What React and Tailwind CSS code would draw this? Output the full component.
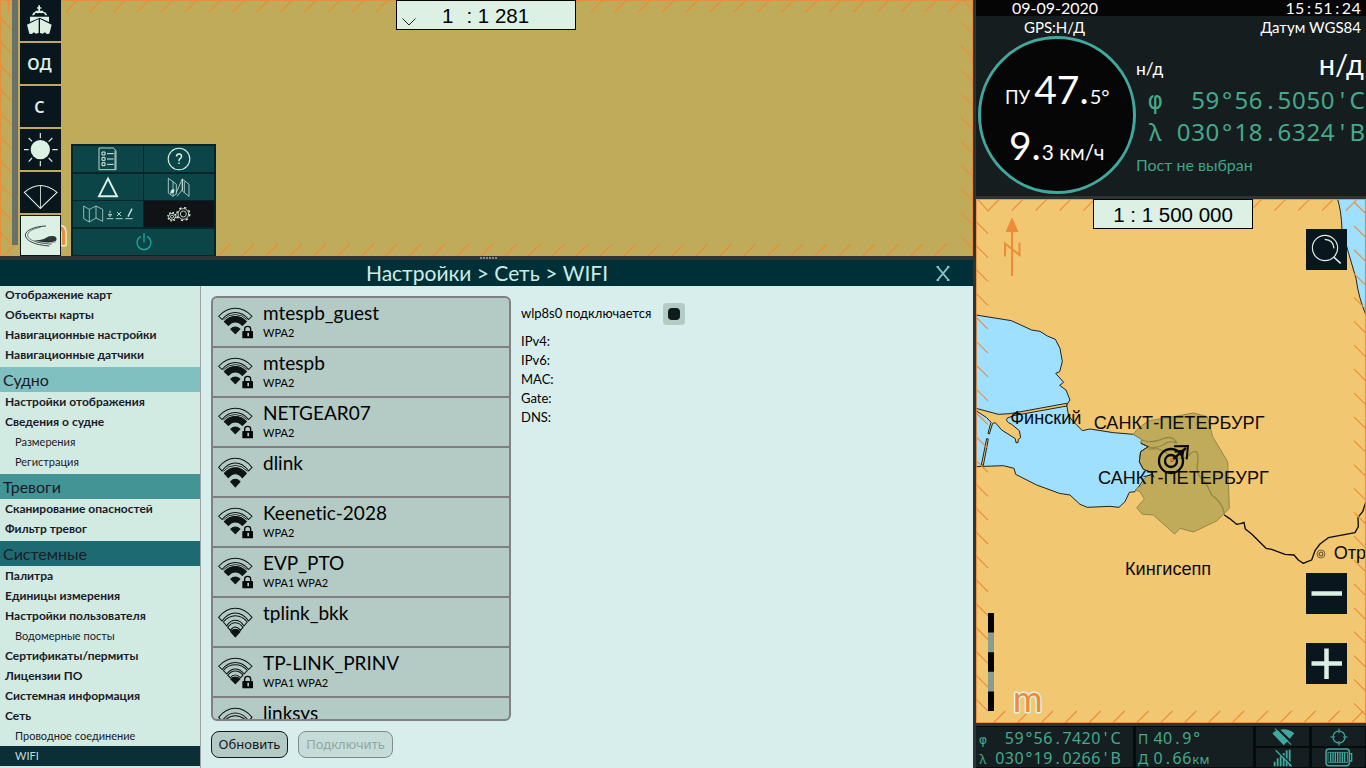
import React from 'react';

const STEP = 23.87;
const range = (n) => Array.from({ length: n }, (_, i) => i);

function Mono({ text }) {
  return (
    <span className="font-['Noto_Sans',sans-serif] tracking-[0.028em] whitespace-nowrap">
      {text.split(/([^0-9])/).filter(Boolean).map((part, i) =>
        /[0-9]/.test(part) ? part : (
          <span key={i} className={'inline-block w-[0.6em] text-center tracking-normal ' + (part === 'φ' ? "font-['DejaVu_Sans_Mono',monospace]" : '')}>{part}</span>
        )
      )}
    </span>
  );
}

/* ---------- wide chart on the left ---------- */

function HarborChart() {
  return (
    <svg className="absolute inset-0" width="973" height="256" viewBox="0 0 973 256">
      <rect width="973" height="256" fill="#bfab5a" />
      <g stroke="#ee8a38" strokeWidth="1.1" fill="none">
        <path d="M0 .5H972.5V256M.5 0V256" opacity=".8" />
        {range(39).map((i) => <path key={i} d={`M${65.7 + STEP * i - 24} 12l12 -12`} />)}
        {range(40).map((i) => <path key={i} d={`M${3.5 + STEP * i} 256l12 -12`} />)}
        {range(11).map((i) => <path key={i} d={`M0 ${17.5 + STEP * (i - 1)}l12 12`} />)}
        {range(12).map((i) => <path key={i} d={`M961.5 ${-1.5 + STEP * i}l11.5 11.5`} />)}
        <path d="M8.5 0V12" />
        <path d="M36.3 40v4" strokeWidth="2" />
      </g>
      <text x="38" y="244.500" fontFamily="Lato, sans-serif" fontSize="36" fill="#ee8a38" stroke="#dcf0e4" strokeWidth="3" strokeLinejoin="round" paintOrder="stroke">m</text>
      <rect x="12" y="0" width="6" height="245" fill="#68706a" />
    </svg>
  );
}

const tool = 'flex size-[41px] shrink-0 items-center justify-center bg-[#0a161d]';

function Toolbar() {
  return (
    <div className="absolute top-0 left-5 flex flex-col gap-[2px] font-['Noto_Sans',sans-serif] text-base font-semibold text-[#dcf0e4]">
      <div className={tool}>
        <svg width="41" height="41" viewBox="0 0 123 123" fill="#dcf0e4">
          <path d="M55 16h5v6h4v4h-4v6h9l2 5h5l6 9h-5l-6-6H48l-7 6h-5l5-9h4l2-5h8v-6h-4v-4h4z" />
          <path d="M30 50H87V66L59 53L30 66z" />
          <path d="M56 57L21 74L28 101L36 102L41 97L48 101L56 99z" />
          <path d="M60 57L95 74L88 101L80 102L75 97L68 101L60 99z" />
          <path d="M46 39h5v7h-5zM55 39h7v7h-7zM66 39h5v7h-5z" fill="#0a161d" />
        </svg>
      </div>
      <div className={tool}><span className="mt-px -ml-[2px]">ОД</span></div>
      <div className={tool}><span className="mt-px -ml-[2px]">С</span></div>
      <div className={tool}>
        <svg width="41" height="41" viewBox="0 0 123 123">
          <circle cx="61" cy="62" r="29" fill="#dcf0e4" />
          <path d="M61 12v16M61 96v16M12 62h14M97 62h16M26 27l10 10M86 87l11 11M97 27L86 38M36 87L26 98" stroke="#dcf0e4" strokeWidth="3.5" />
        </svg>
      </div>
      <div className={tool}>
        <svg width="41" height="41" viewBox="0 0 123 123" fill="none" stroke="#dcf0e4" strokeWidth="3.5">
          <path d="M61 109L13 61Q61 20 111 61z" />
          <path d="M61.500 40V109" strokeWidth="2.500" />
        </svg>
      </div>
      <div className="flex size-[41px] shrink-0 border border-[#0a161d] bg-[#dcf0e4]">
        <svg width="39" height="39" viewBox="3 3 117 117" fill="none" stroke="#3a4646">
          <path d="M78 33C45 34 17 45 16 60C17 78 45 90 88 93" strokeWidth="3" />
          <path d="M62 37C38 41 22 50 23 62C26 76 50 84 95 88" strokeWidth="2" />
          <path d="M40 75Q66 77 76 70Q90 60 104 64Q113 69 108 77Q96 84 74 82Q56 80 40 75z" fill="#283434" stroke="none" />
          <path d="M46 80Q80 90 108 80M78 68L100 76M86 64L106 71" strokeWidth="1.500" />
        </svg>
      </div>
    </div>
  );
}

const cell = 'flex items-center justify-center bg-[#0b4548]';

function QuickMenu() {
  return (
    <div className="absolute top-[144px] left-[71px] grid h-28 w-[145px] grid-cols-[70px_70px] grid-rows-[26px_26px_26px_26px] gap-x-px gap-y-[1.5px] border-2 border-[#04262b] bg-[#04262b]">
      <div className={cell}>
        <svg className="-ml-px" width="19" height="24" viewBox="0 0 57 72" fill="none" stroke="#dcf0e4" strokeWidth="2.500">
          <path d="M3 3H46L54 11V68H3zM51 11V66" />
          <path d="M12 15h9v9h-9zM12 31h9v9h-9zM12 47h9v9h-9zM27 20h20M27 36h20M27 52h20" strokeWidth="3" />
        </svg>
      </div>
      <div className={cell}>
        <svg width="24" height="24" viewBox="0 0 24 24" fill="none" stroke="#dcf0e4">
          <circle cx="12" cy="12" r="10.800" strokeWidth="1.100" />
          <path d="M9.500 9.500Q9.500 7 12 7Q14.600 7 14.600 9.300Q14.600 10.800 12.800 11.900Q12 12.500 12 14.200M12 15.600V17" strokeWidth="1.400" />
        </svg>
      </div>
      <div className={cell}>
        <svg className="-ml-px" width="22" height="22" viewBox="0 0 22 22"><path d="M11 2.500L20 20.200H2z" fill="none" stroke="#dcf0e4" strokeWidth="1.900" /></svg>
      </div>
      <div className={cell}>
        <svg width="24" height="20" viewBox="0 0 72 60" fill="none" stroke="#dcf0e4" strokeWidth="2.200">
          <path d="M4 4L18 14V58L4 48zM18 58L28 50M18 14L28 22M28 22V52M28 46L46 6M46 6V38L30 58M46 6L66 22V58L46 42zM52 14V46" />
          <path d="M13 40l8-3l-1 9l-9 3z" fill="#dcf0e4" />
        </svg>
      </div>
      <div className={cell}>
        <svg className="-ml-px" width="52" height="20" viewBox="0 0 156 60" fill="none" stroke="#c4e2d9" strokeWidth="2.200">
          <path d="M5 6L22 16V54L5 44zM22 54L42 42V6L22 16M42 6L62 16V52L42 42" />
          <path d="M74 44h20M101 44h21M130 44h22M84 20v8M79 31h10l-5 7zM105 24l12 12M117 24l-12 12" strokeWidth="2.700" />
          <path d="M138 38L150 14" strokeWidth="4" />
        </svg>
      </div>
      <div className="flex items-center justify-center bg-[#111215]">
        <svg width="26" height="20" viewBox="0 0 78 60" fill="none" stroke="#dcf0e4">
          <circle cx="52" cy="30" r="16" strokeWidth="2.500" />
          <circle cx="52" cy="30" r="19.500" strokeWidth="4" strokeDasharray="7 8.300" />
          <circle cx="52" cy="30" r="9" strokeWidth="2.500" />
          <circle cx="18" cy="38" r="10" strokeWidth="2.500" />
          <circle cx="18" cy="38" r="12.500" strokeWidth="4" strokeDasharray="4.500 5.300" />
          <circle cx="18" cy="38" r="4.500" strokeWidth="2.500" />
        </svg>
      </div>
      <div className={'col-span-2 ' + cell}>
        <svg width="18" height="20" viewBox="0 0 18 20" fill="none" stroke="#20a79f" strokeWidth="1.300">
          <path d="M6 4.300A7 7 0 1 0 12 4.300M9 1V10.500" />
        </svg>
      </div>
    </div>
  );
}

/* ---------- settings panel ---------- */

const MENU = [
  ['item', 'Отображение карт'], ['item', 'Объекты карты'], ['item', 'Навигационные настройки'], ['item', 'Навигационные датчики'],
  ['head', 'Судно', 'bg-[#80c0c0]'],
  ['item', 'Настройки отображения'], ['item', 'Сведения о судне'], ['sub', 'Размерения'], ['sub', 'Регистрация'],
  ['head', 'Тревоги', 'bg-[#439494]'],
  ['item', 'Сканирование опасностей'], ['item', 'Фильтр тревог'],
  ['head', 'Системные', 'bg-[#1e6a72]'],
  ['item', 'Палитра'], ['item', 'Единицы измерения'], ['item', 'Настройки пользователя'], ['sub', 'Водомерные посты'],
  ['item', 'Сертификаты/пермиты'], ['item', 'Лицензии ПО'], ['item', 'Системная информация'], ['item', 'Сеть'],
  ['sub', 'Проводное соединение'], ['active', 'WIFI'],
];

function Sidebar() {
  return (
    <div className="flex w-[201px] shrink-0 flex-col overflow-hidden border-r border-[#a0a3a5] bg-[#d1eae2] text-[#1b1b28]">
      <div className="-mt-px flex flex-col">
        {MENU.map(([kind, label, bg]) => {
          if (kind === 'head') return <div key={label} className={'mt-[2px] h-[25px] pl-[3px] text-base leading-[26px] ' + bg}>{label}</div>;
          if (kind === 'item') return <div key={label} className="h-5 pl-[5px] text-xs leading-5 font-bold">{label}</div>;
          if (kind === 'sub') return <div key={label} className="h-5 pl-[15px] text-[11px] leading-5">{label}</div>;
          return <div key={label} className="h-5 bg-[#0c2e37] pl-[15px] text-[11px] leading-5 text-[#c4dcd8]">{label}</div>;
        })}
      </div>
    </div>
  );
}

const NETWORKS = [
  ['mtespb_guest', 'WPA2', true], ['mtespb', 'WPA2', true], ['NETGEAR07', 'WPA2', true], ['dlink', '', true],
  ['Keenetic-2028', 'WPA2', true], ['EVP_PTO', 'WPA1 WPA2', true], ['tplink_bkk', '', false],
  ['TP-LINK_PRINV', 'WPA1 WPA2', false], ['linksys', '', false],
];

function WifiIcon({ strong, locked }) {
  return (
    <svg className="shrink-0" width="41" height="48" viewBox="0 0 123 144">
      <g transform={locked ? 'translate(0 3.5) scale(1 .886)' : undefined} fill="none" stroke="#0c1414" strokeWidth="3.200" strokeLinejoin="round">
        <path d="M17 58Q39 31 67 31Q95 31 117 58L107 69Q90 45 67 45Q44 45 27 69z" />
        {strong ? (
          <>
            <path d="M31 70Q46 52 67 52Q88 52 103 70" strokeWidth="2.500" />
            <path d="M34 76Q48 59 67 59Q86 59 100 76L88 89Q79 77 67 77Q55 77 46 89z" fill="#0c1414" />
          </>
        ) : (
          <>
            <path d="M31 72Q46 53 67 53Q88 53 103 72L93 84Q82 67 67 67Q52 67 41 84z" />
            <path d="M44 88Q54 74 67 74Q80 74 90 88L82 97Q75 87 67 87Q59 87 52 97z" />
          </>
        )}
        <path d="M67 117L53 101Q60 94 67 94Q74 94 81 101z" fill="#0c1414" />
      </g>
      {locked && (
        <g>
          <rect x="88" y="99" width="32" height="22" rx="2" fill="#050808" />
          <path d="M95 100V93A9 8 0 0 1 113 93V100" fill="none" stroke="#050808" strokeWidth="4" />
          <path d="M103 104h5v11h-5z" fill="#b4cac5" />
        </g>
      )}
    </svg>
  );
}

function NetworkList() {
  return (
    <div className="h-[425px] w-[300px] overflow-hidden rounded-md border-2 border-[#808083] bg-[#b4cac5] text-black">
      {NETWORKS.map(([name, sec, strong]) => (
        <div key={name} className="flex h-[50px] border-b-2 border-[#808083]">
          <WifiIcon strong={strong} locked={!!sec} />
          <div className="flex flex-col pl-[9px]">
            <div className="h-[26px] text-[19px] leading-[30px]">{name}</div>
            <div className="text-[11px] leading-[18px]">{sec}</div>
          </div>
        </div>
      ))}
    </div>
  );
}

function WifiPage() {
  return (
    <div className="flex flex-1 gap-[10px] bg-[#d8eeec] pt-[10px] pl-[10px]">
      <div className="flex flex-col gap-[10px]">
        <NetworkList />
        <div className="flex gap-[10px] font-['Noto_Sans',sans-serif] text-[13px] text-[#14191b]">
          <div className="flex h-[27px] w-[77px] items-center justify-center rounded-lg border border-[#14191b] bg-[#b4cac5]">Обновить</div>
          <div className="flex h-[27px] w-[95px] items-center justify-center rounded-lg border border-[#808c8c] bg-[#c6dcd8] text-[#92a5a2]">Подключить</div>
        </div>
      </div>
      <div className="flex flex-col text-[13px] text-black">
        <div className="mt-[6px] flex h-[23px] items-center gap-3">
          <span>wlp8s0 подключается</span>
          <span className="flex h-[22px] w-[22px] items-center justify-center rounded bg-[#b4cac5]">
            <span className="size-[12px] rounded bg-[#0e1c1b]" />
          </span>
        </div>
        <div className="mt-[7px] leading-[19px]">
          {['IPv4:', 'IPv6:', 'MAC:', 'Gate:', 'DNS:'].map((t) => <div key={t}>{t}</div>)}
        </div>
      </div>
    </div>
  );
}

/* ---------- right column ---------- */

function Hud() {
  return (
    <div className="flex h-[196px] flex-col overflow-hidden bg-[#161d1f] text-white">
      <div className="flex h-4 justify-between bg-[#050505] pr-[5px] pl-[36px] text-base leading-[15px]">
        <span>09-09-2020</span>
        <span className="tracking-[0.3px]">15<i className="inline-block w-[9px] text-center not-italic">:</i>51<i className="inline-block w-[9px] text-center not-italic">:</i>24</span>
      </div>
      <div className="flex flex-1">
        <div className="flex w-[160px] shrink-0 flex-col pl-[2px]">
          <div className="h-5 pl-[46px] text-[15px] leading-[22px]">GPS:Н/Д</div>
          <div className="flex size-[158px] shrink-0 flex-col rounded-full border-[3px] border-[#40a89e] bg-[#060606]">
            <div className="mt-[26px] flex h-[48px] items-baseline pl-[24px] leading-[48px] whitespace-nowrap">
              <span className="text-[18.500px]">ПУ</span><span className="pl-1 text-[39px]">47.</span><span className="pl-px text-[20px]">5°</span>
            </div>
            <div className="mt-[8px] flex h-[48px] items-baseline pl-[28px] leading-[48px] whitespace-nowrap">
              <span className="text-[39px]">9.</span><span className="pl-px text-[20.800px]">3 км/ч</span>
            </div>
          </div>
        </div>
        <div className="flex flex-1 flex-col">
          <div className="h-5 pr-[5px] text-right text-[15px] leading-[22px]">Датум WGS84</div>
          <div className="flex h-12 items-baseline justify-between pr-[2px] leading-[56px]">
            <span className="text-[17.500px]">н/д</span><span className="text-[29px]">н/д</span>
          </div>
          <div className="flex h-8 justify-between pr-[2px] pl-[12px] text-2xl leading-8 text-[#45a98c]"><Mono text="φ" /><Mono text="59°56.5050'С" /></div>
          <div className="flex h-8 justify-between pr-[2px] pl-[12px] text-2xl leading-8 text-[#45a98c]"><Mono text="λ" /><Mono text="030°18.6324'В" /></div>
          <div className="text-base leading-[34px] text-[#3fa588]">Пост не выбран</div>
        </div>
      </div>
    </div>
  );
}

function OverviewChart() {
  const label = { fontFamily: '"Liberation Sans", Arial, sans-serif', fontSize: 54.4, fill: '#0a0a08' };
  return (
    <svg className="absolute inset-0" width="390" height="524" viewBox="0 0 390 524">
      <rect width="390" height="524" fill="#f1c772" />
      <g transform="translate(-6 181) scale(.33333)" strokeLinejoin="round">
        <path d="M18 -195L124 -178L185 -150L210 -146L232 -132L256 -122L270 -95L277 -55L269 -25L257 -20L281 7L269 16L288 30L300 60L290 75L296 108L310 125L337 152L360 147L430 158L490 163L515 178L513 190L535 200L512 215L508 245L520 268L548 278L520 300L510 315L495 335L478 337L465 365L447 382L420 379L352 382L330 373L300 345L268 340L200 315L137 283L132 265L100 257L18 260z" fill="#9fdfff" stroke="#22221c" strokeWidth="3" />
        <path d="M1102 -545Q1114 -510 1116 -450L1136 -380L1158 -305Q1166 -245 1188 -195V-570H1095z" fill="#9fdfff" stroke="#22221c" strokeWidth="3" />
        <path d="M18 85L85 103L120 101L290 70L291 78L135 106L112 114Q104 124 125 133L148 152L152 173L145 178L144 188L138 188L136 176L95 150L76 128L68 130L58 162L54 160L63 127L50 113L18 92zM50 176L55 177L40 256L34 255z" fill="#f1c772" stroke="#22221c" strokeWidth="3" />
        <path d="M490 163L500 150L535 122L600 112L670 99L712 110L728 170L773 245L778 385L740 423L670 456L630 445L614 462L550 405L517 403L500 383L523 357L510 335L495 330L520 312L520 297L548 278L520 268L508 245L512 215L535 200L513 190L515 178z" fill="#bfab5a" stroke="#93874a" strokeWidth="3" />
        <path d="M515 180Q545 192 580 176Q610 165 620 190Q600 178 580 195Q550 208 535 200M535 208Q570 200 590 220Q640 250 660 222Q685 200 684 240Q675 285 700 300Q715 320 725 345Q760 370 763 405" fill="none" stroke="#93874a" strokeWidth="4" />
        <path d="M548 278L520 268M520 290L548 284L552 292M513 190L535 200L512 215L508 245L520 268" fill="none" stroke="#22221c" strokeWidth="3" />
        <path d="M763 405L778 415L800 433L812 431L822 427L826 447L845 462L888 505L905 508L945 523L972 525L985 540L1000 550L1012 545L1025 540L1035 512L1050 492L1075 473L1155 458L1165 440L1164 412L1178 395L1188 365" fill="none" stroke="#0b0b08" strokeWidth="4" />
        <circle cx="1053" cy="522" r="12" fill="none" stroke="#7a6236" strokeWidth="3" />
        <circle cx="1053" cy="522" r="5.500" fill="none" stroke="#7a6236" strokeWidth="4" />
        <text x="121" y="133" {...label}>Финский</text>
        <text x="371" y="147" {...label}>САНКТ-ПЕТЕРБУРГ</text>
        <text x="384" y="312" {...label}>САНКТ-ПЕТЕРБУРГ</text>
        <text x="465" y="584" {...label}>Кингисепп</text>
        <text x="1091" y="536" {...label}>Отр</text>
        <g fill="none" stroke="#080808" strokeLinejoin="miter">
          <circle cx="603" cy="243" r="36" strokeWidth="7" />
          <circle cx="603" cy="243" r="18" strokeWidth="7" />
          <path d="M603 243L648 204" strokeWidth="7" />
          <path d="M612 199L654 198L650 238M614 215L640 212L636 236" strokeWidth="6" />
        </g>
        <circle cx="606" cy="239" r="5" fill="#ee7a30" />
      </g>
      <g stroke="#ee8a38" strokeWidth="1.100" fill="none">
        <path d="M.5 .5H389.500V523.500H.5z" opacity=".8" />
        <path d="M1.500 0L12 12L23.500 0" />
        {range(15).map((i) => <path key={i} d={`M${35.7 + STEP * i} 11.700l11.500 -11.500`} />)}
        {range(16).map((i) => <path key={i} d={`M${17.3 + STEP * i} 524l12 -12`} />)}
        {range(21).map((i) => <path key={i} d={`M0 ${22.7 + STEP * i}l12 12`} />)}
        {range(22).map((i) => <path key={i} d={`M378 ${3 + STEP * i}l12 12`} />)}
      </g>
      <g fill="#ee8a38">
        <path d="M36 18.300L42.500 33H29.500z" />
        <path d="M36 30V77M29 57.500V44.500L43.500 56V43.500" fill="none" stroke="#ee8a38" strokeWidth="2" />
      </g>
      <path d="M15 414V512" stroke="#8a9c8c" strokeWidth="6" />
      <path d="M15 414V512" stroke="#030303" strokeWidth="6" strokeDasharray="19.600" />
      <text x="37" y="512.500" fontFamily="Lato, sans-serif" fontSize="36" fill="#ee8a38" stroke="#dcf0e4" strokeWidth="3" strokeLinejoin="round" paintOrder="stroke">m</text>
    </svg>
  );
}

const mapButton = 'absolute left-[330px] flex size-[41px] bg-[#0a161d]';

function StatusBar() {
  const icon = 'flex items-center justify-center bg-[#151e20]';
  return (
    <div className="flex h-[42px] gap-[3px] bg-[#070b0c] pt-px pb-px text-base text-[#45a98c]">
      <div className="flex w-[157px] flex-col bg-[#151e20] pr-[13px] pl-[3px]">
        <div className="flex h-5 items-baseline justify-between leading-[22px]"><span className="text-[13px]"><Mono text="φ" /></span><Mono text="59°56.7420'С" /></div>
        <div className="flex h-5 items-baseline justify-between leading-[22px]"><span className="text-[13px]"><Mono text="λ" /></span><Mono text="030°19.0266'В" /></div>
      </div>
      <div className="flex w-[117px] flex-col bg-[#151e20] pl-[2px]">
        <div className="flex h-5 items-baseline gap-[7px] leading-[22px]"><span className="text-[14px]"><Mono text="П" /></span><Mono text="40.9°" /></div>
        <div className="flex h-5 items-baseline gap-[7px] leading-[22px]"><span className="text-[14px]"><Mono text="Д" /></span><span><Mono text="0.66" /><span className="text-[13px]"><Mono text="км" /></span></span></div>
      </div>
      <div className="grid flex-1 grid-cols-[53px_53px] grid-rows-[19px_19px] gap-x-[3px] gap-y-[2px] text-[#40a89e]">
        <div className={icon}>
          <svg width="24" height="18" viewBox="0 0 72 54" fill="currentColor">
            <path d="M4 16Q12 9 20 7L52 38L38 52zM28 5Q50 0 70 16L56 32z" />
            <path d="M12 2L60 50" stroke="currentColor" strokeWidth="3.500" />
          </svg>
        </div>
        <div className={icon}>
          <svg width="18" height="18" viewBox="0 0 18 18" fill="none" stroke="currentColor" strokeWidth="1.200">
            <circle cx="9" cy="9" r="6" /><path d="M9 .5V5M9 13V17.500M.5 9H5M13 9H17.500" />
          </svg>
        </div>
        <div className={icon}>
          <svg width="20" height="18" viewBox="0 0 60 54" stroke="currentColor" fill="none">
            <path d="M5 52V38M14 52V28M23 52V22M32 52V12M41 52V4M50 52V2" strokeWidth="5.500" />
            <path d="M12 2L60 50" stroke="#151e20" strokeWidth="4" /><path d="M8 4L56 52" strokeWidth="4" />
          </svg>
        </div>
        <div className={icon}>
          <svg width="28" height="19" viewBox="0 0 84 57" stroke="currentColor" fill="none">
            <rect x="3" y="3" width="70" height="50" rx="9" strokeWidth="4.500" />
            <path d="M75 17h5v22h-5" strokeWidth="4" />
            <rect x="9" y="13" width="58" height="30" strokeWidth="2.500" />
            <path d="M17 14V42M24 14V42M31 14V42M38 14V42M45 14V42M52 14V42M59 14V42" strokeWidth="4" />
          </svg>
        </div>
      </div>
    </div>
  );
}

export default function App() {
  return (
    <div className="flex h-[768px] w-[1366px] gap-[3px] overflow-hidden bg-[#2c3436] font-['Lato',sans-serif] [font-variant-ligatures:none]">
      <div className="flex w-[973px] flex-col">
        <div className="relative h-64 overflow-hidden">
          <HarborChart />
          <Toolbar />
          <QuickMenu />
          <div className="absolute top-0 left-[396px] h-[30px] w-[180px] border border-black bg-[#dcf0e4]">
            <svg className="absolute top-[17px] left-[5px]" width="14" height="8" viewBox="0 0 14 8" fill="none" stroke="#222" strokeWidth="1"><path d="M.5 .5L7 7L13.500 .5" /></svg>
            <div className="pl-[45px] font-['Liberation_Sans',sans-serif] text-[20.500px] leading-[30px] whitespace-pre text-black">1<span className="pl-[13px]">: 1 281</span></div>
          </div>
        </div>
        <div className="flex h-1 justify-center gap-px bg-[#2f3335] pt-px pl-1">
          {range(6).map((i) => <div key={i} className="h-[2px] w-[2px] bg-[#858a88]" />)}
        </div>
        <div className="relative flex h-[26px] items-center justify-center bg-[#003037] pl-px text-[21px] text-[#cdebe4]">
          <span>Настройки &gt; Сеть &gt; WIFI</span>
          <svg className="absolute top-[6px] left-[936px]" width="14" height="15" viewBox="0 0 14 15" fill="none" stroke="#86c6c6" strokeWidth="1.700"><path d="M1.500 .9L12.500 14.100M12.500 .9L1.500 14.100M.5 .9H3M11 .9H13.500M.5 14.100H3M11 14.100H13.500" /></svg>
        </div>
        <div className="flex flex-1 overflow-hidden">
          <Sidebar />
          <WifiPage />
        </div>
      </div>
      <div className="flex w-[390px] flex-col gap-[3px]">
        <Hud />
        <div className="relative h-[524px] overflow-hidden">
          <OverviewChart />
          <div className="absolute top-0 left-[117px] h-[30px] w-[160px] border border-black bg-[#dcf0e4] text-center font-['Liberation_Sans',sans-serif] text-[20.500px] leading-[30px] text-black">1 : 1 500 000</div>
          <div className={mapButton + ' top-[30px]'}>
            <svg width="41" height="41" viewBox="0 0 123 123" fill="none" stroke="#dcf0e4">
              <circle cx="57" cy="57" r="38" strokeWidth="3.500" /><path d="M83 84L104 103" strokeWidth="5" /><path d="M56 31Q82 32 84 58" strokeWidth="4" />
            </svg>
          </div>
          <div className={mapButton + ' top-[374px]'}>
            <svg width="41" height="41"><path d="M5.500 20.500H36" stroke="#dcf0e4" strokeWidth="4.500" /></svg>
          </div>
          <div className={mapButton + ' top-[444px]'}>
            <svg width="41" height="41"><path d="M5.500 20.500H36M20.500 5.500V36" stroke="#dcf0e4" strokeWidth="4.500" /></svg>
          </div>
        </div>
        <StatusBar />
      </div>
    </div>
  );
}
